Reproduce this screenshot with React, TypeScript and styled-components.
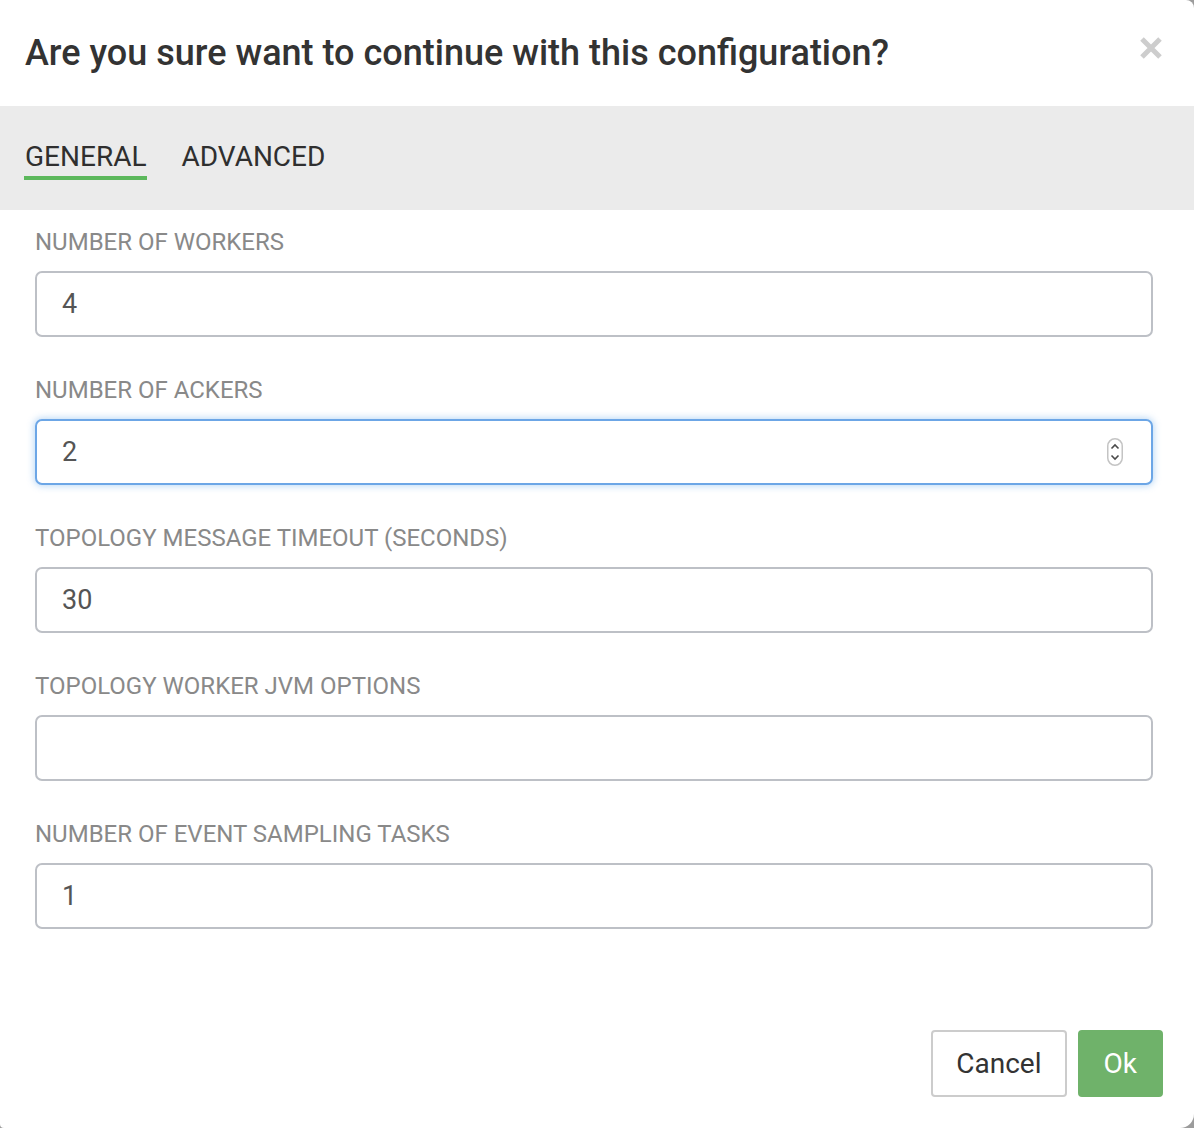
import React from "react";
import styled, { createGlobalStyle } from "styled-components";

const GlobalStyle = createGlobalStyle`
  html, body {
    margin: 0;
    padding: 0;
    background: #9c9c9c;
  }
  body {
    font-family: Roboto, "Liberation Sans", Arial, sans-serif;
  }
  * { box-sizing: border-box; }
`;

const Modal = styled.div`
  width: 1194px;
  height: 1128px;
  background: #ffffff;
  border-radius: 0 8px 14px 4px;
  display: flex;
  flex-direction: column;
  overflow: hidden;
`;

const Header = styled.div`
  height: 106px;
  padding: 0 31px 0 25px;
  display: flex;
  align-items: center;
  justify-content: space-between;
`;

const Title = styled.h4`
  margin: 0;
  font-size: 36px;
  font-weight: 500;
  color: #333333;
  letter-spacing: 0;
`;

const CloseButton = styled.button`
  border: none;
  background: none;
  padding: 0;
  width: 24px;
  height: 24px;
  display: flex;
  align-items: center;
  justify-content: center;
  cursor: pointer;
  margin-top: -10px;
`;

const TabBar = styled.div`
  height: 104px;
  background: #ebebeb;
  padding: 34px 0 0 24px;
  display: flex;
  align-items: flex-start;
  gap: 33px;
`;

const Tab = styled.div<{ $active?: boolean }>`
  font-size: 28px;
  line-height: 34px;
  color: #2f2f2f;
  padding-bottom: 2px;
  border-bottom: 4px solid ${(p) => (p.$active ? "#5cb85c" : "transparent")};
  padding-left: 1px;
  padding-right: 1px;
`;

const Body = styled.div`
  flex: 1;
  padding: 17px 41px 0 35px;
  display: flex;
  flex-direction: column;
  gap: 38px;
`;

const Field = styled.div`
  display: flex;
  flex-direction: column;
  gap: 14px;
`;

const Label = styled.label`
  font-size: 24px;
  line-height: 30px;
  color: #898989;
`;

const InputWrap = styled.div`
  position: relative;
`;

const Input = styled.input<{ $focused?: boolean }>`
  width: 100%;
  height: 66px;
  border: 2px solid ${(p) => (p.$focused ? "#6ca6e6" : "#bdc0c6")};
  border-radius: 7px;
  padding: 0 25px;
  font-family: Roboto, "Liberation Sans", Arial, sans-serif;
  font-size: 27px;
  color: #555555;
  background: #ffffff;
  outline: none;
  box-shadow: ${(p) =>
    p.$focused ? "0 0 7px 1px rgba(102, 168, 233, 0.45)" : "none"};
`;

const Spinner = styled.svg`
  position: absolute;
  right: 30px;
  top: 19px;
`;

const Footer = styled.div`
  display: flex;
  justify-content: flex-end;
  gap: 11px;
  padding: 0 31px 31px 0;
`;

const Button = styled.button<{ $primary?: boolean }>`
  height: 67px;
  padding: 0 ${(p) => (p.$primary ? "24px" : "23px")};
  font-family: Roboto, "Liberation Sans", Arial, sans-serif;
  font-size: 28px;
  border-radius: 4px;
  border: 2px solid ${(p) => (p.$primary ? "#6fb26a" : "#cccccc")};
  background: ${(p) => (p.$primary ? "#6fb26a" : "#ffffff")};
  color: ${(p) => (p.$primary ? "#ffffff" : "#333333")};
  cursor: pointer;
`;

const fields = [
  { label: "NUMBER OF WORKERS", value: "4" },
  { label: "NUMBER OF ACKERS", value: "2", focused: true },
  { label: "TOPOLOGY MESSAGE TIMEOUT (SECONDS)", value: "30" },
  { label: "TOPOLOGY WORKER JVM OPTIONS", value: "" },
  { label: "NUMBER OF EVENT SAMPLING TASKS", value: "1" },
];

export default function App() {
  return (
    <>
      <GlobalStyle />
      <Modal>
        <Header>
          <Title>Are you sure want to continue with this configuration?</Title>
          <CloseButton aria-label="Close">
            <svg width="24" height="24" viewBox="0 0 24 24">
              <path
                d="M3 3 L21 21 M21 3 L3 21"
                stroke="#cdcdcd"
                strokeWidth="5"
                strokeLinecap="butt"
              />
            </svg>
          </CloseButton>
        </Header>
        <TabBar>
          <Tab $active>GENERAL</Tab>
          <Tab>ADVANCED</Tab>
        </TabBar>
        <Body>
          {fields.map((f) => (
            <Field key={f.label}>
              <Label>{f.label}</Label>
              <InputWrap>
                <Input $focused={f.focused} defaultValue={f.value} />
                {f.focused && (
                  <Spinner width="16" height="28" viewBox="0 0 16 28">
                    <rect
                      x="0.75"
                      y="0.75"
                      width="14.5"
                      height="26.5"
                      rx="7.25"
                      fill="#ffffff"
                      stroke="#c4c4c4"
                      strokeWidth="1.5"
                    />
                    <path
                      d="M4.5 10.5 L8 7 L11.5 10.5"
                      fill="none"
                      stroke="#4a4a4a"
                      strokeWidth="1.6"
                    />
                    <path
                      d="M4.5 17.5 L8 21 L11.5 17.5"
                      fill="none"
                      stroke="#4a4a4a"
                      strokeWidth="1.6"
                    />
                  </Spinner>
                )}
              </InputWrap>
            </Field>
          ))}
        </Body>
        <Footer>
          <Button>Cancel</Button>
          <Button $primary>Ok</Button>
        </Footer>
      </Modal>
    </>
  );
}
